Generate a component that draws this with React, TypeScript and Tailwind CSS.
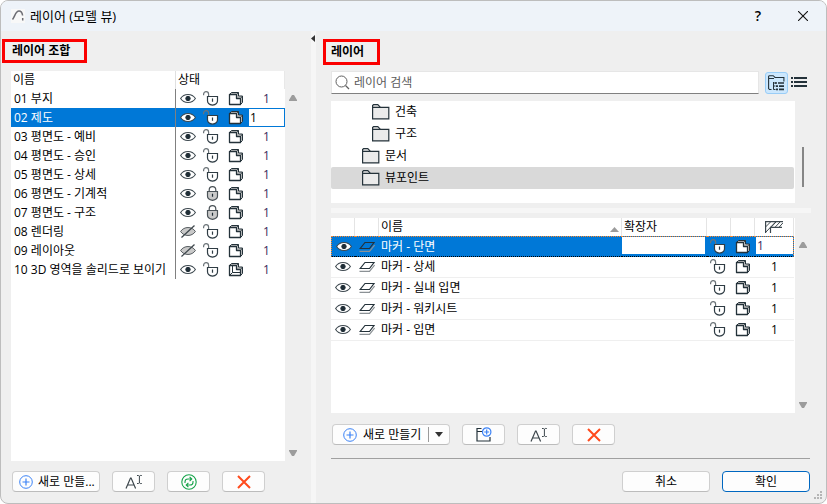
import { useState, type ReactNode } from 'react'

type Combination = { name: string; hidden?: boolean; locked?: boolean; wire?: boolean }

const combinations: Combination[] = [
  { name: '01 부지' },
  { name: '02 제도' },
  { name: '03 평면도 - 예비' },
  { name: '04 평면도 - 승인' },
  { name: '05 평면도 - 상세' },
  { name: '06 평면도 - 기계적', locked: true },
  { name: '07 평면도 - 구조', locked: true },
  { name: '08 렌더링', hidden: true },
  { name: '09 레이아웃', hidden: true },
  { name: '10 3D 영역을 솔리드로 보이기', wire: true },
]

const folders = [
  { name: '건축', nested: true },
  { name: '구조', nested: true },
  { name: '문서', nested: false },
  { name: '뷰포인트', nested: false },
]

const layers = ['마커 - 단면', '마커 - 상세', '마커 - 실내 입면', '마커 - 워키시트', '마커 - 입면']

function EyeIcon({ hidden = false }: { hidden?: boolean }) {
  if (hidden) {
    return (
      <svg width="16" height="13" viewBox="0 0 16 13" fill="none" stroke="#555b5f">
        <path d="M.6 6.500C4 1.200 12 1.200 15.400 6.500 12 11.800 4 11.800.6 6.500Z" fill="#c9c9c9" />
        <path d="M1.500 12.500 14.500.5" stroke="#3c454b" strokeWidth="1.200" />
      </svg>
    )
  }
  return (
    <svg width="16" height="13" viewBox="0 0 16 13" fill="none" stroke="#3d484f">
      <path d="M.6 6.500C4 1.200 12 1.200 15.400 6.500 12 11.800 4 11.800.6 6.500Z" fill="#fff" strokeWidth="1.100" />
      <circle cx="8" cy="6.500" r="2.200" fill="#1f2d36" stroke="#1f2d36" />
    </svg>
  )
}

function LockIcon({ locked = false }: { locked?: boolean }) {
  if (locked) {
    return (
      <svg width="18" height="15" viewBox="0 0 18 15" fill="none" stroke="#4a5257" strokeWidth="1.200">
        <path d="M6.200 5.500V4a3.300 3.300 0 0 1 6.600 0v1.500" />
        <path d="M4.500 5.500h10v4.700c0 2.200-2.300 3.600-5 4.100-2.700-.5-5-1.900-5-4.100Z" fill="#c9c9c9" />
        <path d="M9.500 7.800v3" stroke="#1f2d36" />
      </svg>
    )
  }
  return (
    <svg width="18" height="15" viewBox="0 0 18 15" fill="none" stroke="#2f3c44" strokeWidth="1.200">
      <path d="M.6 4.200V3.200a2.500 2.500 0 0 1 5 0v2.300" stroke="#6b7378" />
      <path d="M4.500 5.500h10v4.200c0 2.400-2.300 4-5 4.500-2.700-.5-5-2.100-5-4.500Z" fill="#fff" />
      <path d="M9.500 7.500v3.200" />
    </svg>
  )
}

function SolidIcon({ wire = false }: { wire?: boolean }) {
  return (
    <svg width="16" height="15" viewBox="0 0 16 15" fill="none" stroke="#24323a" strokeLinejoin="round">
      <path d="M1.500 3.500 3.500 1.500h7v3.500h4v6.500l-2 2Z" fill="#c9c9c9" />
      <path d="M1.500 3.500h7v4h4v6h-11Z" fill="#fff" strokeWidth="1.300" />
      <path d="m8.500 3.500 2-2M12.500 7.500l2-2.500" strokeWidth=".8" />
      {wire ? <path d="M4.500 3.500v7h8M1.500 13.500l3-3" /> : null}
    </svg>
  )
}

function LayerIcon() {
  return (
    <svg width="16" height="11" viewBox="0 0 16 11" fill="none">
      <path d="M.5 10.400h10L15.600 4" stroke="#8b9195" strokeWidth="1.200" />
      <path d="M6 1.500h9l-4.500 6H1.200Z" stroke="#24323a" strokeWidth="1.200" />
    </svg>
  )
}

function FolderIcon() {
  return (
    <svg width="18" height="16" viewBox="0 0 18 16" fill="none" stroke="#24323a" strokeWidth="1.200">
      <path d="M.6 14.400V1.500L1.500.7h4.300l2.400 2.500" fill="#ebebeb" />
      <path d="M.6 3.400h16.200v11.500H.6Z" fill="#ebebeb" />
    </svg>
  )
}

function PlusIcon() {
  return (
    <svg width="14" height="14" viewBox="0 0 14 14" fill="none" stroke="#3b82f6" className="shrink-0">
      <circle cx="7" cy="7" r="6.300" />
      <path d="M7 3.500v7M3.500 7h7" strokeWidth="1.200" />
    </svg>
  )
}

function RenameIcon() {
  return (
    <svg width="18" height="16" viewBox="0 0 18 16" fill="none" stroke="#3d474d" strokeWidth="1.200">
      <path d="m1 14.500 4.500-10.500h.6l4.500 10.500M2.600 11h6.600" />
      <path d="M12 1.500h1.500l.9.700.9-.7h1.500M14.400 2v7M12 9.500h1.500l.9-.7.9.7h1.500" strokeWidth="1" />
    </svg>
  )
}

function DeleteIcon() {
  return (
    <svg width="14" height="14" viewBox="0 0 14 14" stroke="#ff4a1c" strokeWidth="2">
      <path d="m1 1 12 12M13 1 1 13" />
    </svg>
  )
}

function RefreshIcon() {
  return (
    <svg width="16" height="16" viewBox="0 0 16 16" fill="none" stroke="#16a34a" strokeWidth="1.100">
      <circle cx="8" cy="8" r="7.200" />
      <path d="M4 9V7.800C4 6 5.500 5 7 5h3.500M8.600 2.800 10.800 5 8.600 7.200M12 7v1.200C12 10 10.500 11 9 11H5.500M7.400 8.800 5.200 11l2.200 2.200" />
    </svg>
  )
}

function NewFolderIcon() {
  return (
    <svg width="16" height="15" viewBox="0 0 16 15" fill="none" stroke="#24323a" strokeWidth="1.200">
      <path d="M6 4.500H1M14 10v4H1V1.500h4.500" />
      <circle cx="10.700" cy="5" r="4.200" fill="#fff" stroke="#3b82f6" />
      <path d="M10.700 2.500v5M8.200 5h5" stroke="#3b82f6" />
    </svg>
  )
}

function Arrow({ down = false }: { down?: boolean }) {
  return (
    <svg width="8" height="6" viewBox="0 0 8 6" fill="#9c9c9c">
      <path d={down ? 'M0 0h8v1L5 6H3L0 1Z' : 'M0 6h8V5L5 0H3L0 5Z'} />
    </svg>
  )
}

function ScrollArrows() {
  return (
    <div className="flex w-4 flex-col items-center justify-between pb-[5px]">
      <button aria-label="위로" className="block" type="button"><Arrow /></button>
      <button aria-label="아래로" className="block" type="button"><Arrow down /></button>
    </div>
  )
}

function IconButton({ label, children }: { label: string; children: ReactNode }) {
  return (
    <button
      aria-label={label}
      className="flex h-[21px] w-[43px] items-center justify-center rounded border border-[#cfcfcf] border-b-[#bcbcbc] bg-[#fdfdfd]"
      type="button"
    >
      {children}
    </button>
  )
}

function StateButton({ label, children }: { label: string; children: ReactNode }) {
  return (
    <button aria-label={label} className="flex w-full items-center justify-center" type="button">
      {children}
    </button>
  )
}

function CombinationPanel() {
  const [selected, setSelected] = useState(1)
  const [group, setGroup] = useState('1')

  return (
    <section className="flex w-[310px] shrink-0 flex-col pb-[11px]">
      <h2 className="mt-2 ml-px w-[85px] border-[3px] border-[#fb0000] px-[7px] py-px text-[12px] leading-4 font-bold">
        레이어 조합
      </h2>
      <div className="mt-2 flex min-h-0 flex-1 pl-[10px]">
        <div className="min-w-0 flex-1 bg-white">
          <table className="w-full table-fixed border-separate border-spacing-0">
            <colgroup>
              <col />
              <col className="w-6" />
              <col className="w-6" />
              <col className="w-6" />
              <col className="w-[37px]" />
            </colgroup>
            <thead>
              <tr className="h-[18px] text-left">
                <th className="border-r border-[#e0e0e0] pl-[2px] font-normal">이름</th>
                <th className="border-r border-[#e8e8e8] pl-[2px] font-normal" colSpan={4}>상태</th>
              </tr>
            </thead>
            <tbody>
              {combinations.map((item, index) => (
                <tr
                  className={index === selected ? 'h-[19px] bg-[#0078d7] text-white' : 'h-[19px]'}
                  key={item.name}
                  onClick={() => setSelected(index)}
                >
                  <td className="truncate border-r border-[#808080] pl-[3px]">{item.name}</td>
                  <td><StateButton label="표시"><EyeIcon hidden={item.hidden} /></StateButton></td>
                  <td><StateButton label="잠금"><LockIcon locked={item.locked} /></StateButton></td>
                  <td><StateButton label="솔리드"><SolidIcon wire={item.wire} /></StateButton></td>
                  {index === selected ? (
                    <td>
                      <input
                        aria-label="교차 그룹"
                        className="block h-[19px] w-full border border-[#0078d7] bg-white px-px text-black outline-none"
                        onChange={(e) => setGroup(e.target.value)}
                        value={group}
                      />
                    </td>
                  ) : (
                    <td className="text-center text-[#3b2a5c]">1</td>
                  )}
                </tr>
              ))}
            </tbody>
          </table>
        </div>
        <div className="flex w-[26px] pt-6"><ScrollArrows /></div>
      </div>
      <div className="mt-[10px] flex gap-3 pl-[11px]">
        <button
          className="flex h-[21px] w-[88px] items-center gap-[5px] rounded border border-[#cfcfcf] border-b-[#bcbcbc] bg-[#fdfdfd] px-[6px]"
          type="button"
        >
          <PlusIcon />
          <span className="whitespace-nowrap">새로 만들...</span>
        </button>
        <IconButton label="이름 변경"><RenameIcon /></IconButton>
        <IconButton label="업데이트"><RefreshIcon /></IconButton>
        <IconButton label="삭제"><DeleteIcon /></IconButton>
      </div>
    </section>
  )
}

function LayerTable() {
  const [selected, setSelected] = useState(0)
  const [extension, setExtension] = useState('')
  const [group, setGroup] = useState('1')

  return (
    <table className="w-full table-fixed border-separate border-spacing-0">
      <colgroup>
        <col className="w-6" />
        <col className="w-6" />
        <col />
        <col className="w-[85px]" />
        <col className="w-6" />
        <col className="w-6" />
        <col className="w-[39px]" />
      </colgroup>
      <thead>
        <tr className="h-[18px] text-left [&>th]:border-r [&>th]:border-[#e4e4e4] [&>th]:font-normal">
          <th />
          <th />
          <th>
            <div className="flex items-end justify-between pr-[2px] pl-[2px]">
              이름
              <svg className="mb-[3px]" width="9" height="5" viewBox="0 0 9 5" fill="#9c9c9c"><path d="M0 5h9L4.500 0Z" /></svg>
            </div>
          </th>
          <th className="pl-[2px]">확장자</th>
          <th />
          <th />
          <th>
            <svg className="mx-auto" width="18" height="12" viewBox="0 0 18 12" fill="none" stroke="#3d484f">
              <path d="M.6 12V.7H18M5.500 12V6.300H17" strokeWidth="1.200" />
              <path d="m.5 6 5-5M.5 11.500l10-10.500M6 6.300 11 1M10 6.300 15 1M14 6.300l4-4.500" />
            </svg>
          </th>
        </tr>
      </thead>
      <tbody>
        {layers.map((name, index) => (
          <tr
            className={
              index === selected
                ? 'h-[21px] bg-[#0078d7] text-white [&>td]:border-t [&>td]:border-b [&>td]:border-dotted [&>td]:border-t-[#ff8728] [&>td]:border-b-black [&>td:first-child]:border-l [&>td:first-child]:border-l-[#ff8728] [&>td:last-child]:border-r [&>td:last-child]:border-r-[#ff8728]'
                : 'h-[21px] [&>td]:border-b [&>td]:border-[#efefef] [&>td]:pb-px'
            }
            key={name}
            onClick={() => setSelected(index)}
          >
            <td><StateButton label="표시"><EyeIcon /></StateButton></td>
            <td><StateButton label="레이어"><LayerIcon /></StateButton></td>
            <td className="truncate pl-[2px]">{name}</td>
            {index === selected ? (
              <td className="pr-[2px] align-top">
                <input
                  aria-label="확장자"
                  className="block h-[17px] w-full bg-white px-px text-black outline-none"
                  onChange={(e) => setExtension(e.target.value)}
                  value={extension}
                />
              </td>
            ) : (
              <td />
            )}
            <td><StateButton label="잠금"><LockIcon /></StateButton></td>
            <td><StateButton label="솔리드"><SolidIcon /></StateButton></td>
            {index === selected ? (
              <td className="pl-px align-top">
                <input
                  aria-label="교차 그룹"
                  className="block h-[17px] w-full bg-white px-px text-[#3b2a5c] outline-none"
                  onChange={(e) => setGroup(e.target.value)}
                  value={group}
                />
              </td>
            ) : (
              <td className="text-center">1</td>
            )}
          </tr>
        ))}
      </tbody>
    </table>
  )
}

function LayerPanel() {
  const [query, setQuery] = useState('')
  const [folder, setFolder] = useState('뷰포인트')

  return (
    <section className="flex min-w-0 flex-1 flex-col pr-[15px] pb-[11px] pl-[15px]">
      <h2 className="mt-2 -ml-2 w-[57px] border-[3px] border-[#fb0000] px-[5px] py-[2px] text-[12px] leading-4 font-bold">
        레이어
      </h2>
      <div className="mt-[6px] flex items-center">
        <label className="flex h-[23px] flex-1 items-center gap-1 border border-[#e6e6e6] border-b-[#808080] bg-white pl-[3px]">
          <svg width="15" height="15" viewBox="0 0 15 15" fill="none" stroke="#5f5f5f">
            <circle cx="6.500" cy="6.500" r="5.500" />
            <path d="m10.500 10.500 3.500 3.500" strokeWidth="1.200" />
          </svg>
          <input
            aria-label="레이어 검색"
            className="min-w-0 flex-1 outline-none placeholder:text-[#5a5a5a]"
            onChange={(e) => setQuery(e.target.value)}
            placeholder="레이어 검색"
            value={query}
          />
        </label>
        <button
          aria-label="트리 보기"
          className="ml-[6px] flex h-[22px] w-[23px] items-center justify-center rounded-[3px] border border-[#99cdf7] bg-[#cce7fd]"
          type="button"
        >
          <svg width="17" height="16" viewBox="0 0 17 16" fill="none" stroke="#24323a">
            <path d="M3.500 14.500h-2L.6 13.500V1.500L1.200.7h4L7 2.500h8.900v4M.6 3.500H6" strokeWidth="1.100" />
            <path d="M5.500 7v7.500H7.500M5.500 11H7.500M5 8h3" />
            <path d="M7 8h2M10 8h6M8 11.200h2M11 11.200h5M8 14.400h2M11 14.400h5" strokeWidth="1.700" />
          </svg>
        </button>
        <button aria-label="목록 보기" className="mr-1 ml-[3px]" type="button">
          <svg width="16" height="11" viewBox="0 0 16 11" fill="#24323a">
            <path d="M0 0h2v2H0zM3 0h13v2H3zM0 4h2v2H0zM3 4h13v2H3zM0 8h2v2H0zM3 8h13v2H3z" />
          </svg>
        </button>
      </div>

      <div className="mt-[7px] flex h-[102px] shrink-0">
        <ul className="min-w-0 flex-1 overflow-hidden bg-white pr-px">
          {folders.map((item) => (
            <li key={item.name}>
              <button
                className={`flex h-[22px] w-full items-center gap-[5px] rounded-[2px] text-left ${item.nested ? 'pl-[41px]' : 'pl-[31px]'} ${item.name === folder ? 'bg-[#d9d9d9]' : ''}`}
                onClick={() => setFolder(item.name)}
                type="button"
              >
                <FolderIcon />
                {item.name}
              </button>
            </li>
          ))}
        </ul>
        <div className="w-4 pt-[46px] pl-[7px]">
          <div className="h-10 w-[2px] bg-[#868686]" />
        </div>
      </div>

      <div className="my-[5px] h-[5px] shrink-0 bg-[#f6f6f6]" />

      <div className="flex min-h-0 flex-1">
        <div className="min-w-0 flex-1 bg-white pr-px"><LayerTable /></div>
        <div className="flex pt-6"><ScrollArrows /></div>
      </div>

      <div className="mt-[11px] flex gap-3 pl-px">
        <div className="flex h-[21px] w-[118px] items-center rounded border border-[#cfcfcf] border-b-[#bcbcbc] bg-[#fdfdfd]">
          <button className="flex flex-1 items-center gap-[6px] pl-[10px] whitespace-nowrap" type="button">
            <PlusIcon />
            새로 만들기
          </button>
          <button
            aria-label="새로 만들기 옵션"
            className="flex h-[15px] w-[21px] items-center justify-center border-l border-[#9a9a9a]"
            type="button"
          >
            <svg width="8" height="5" viewBox="0 0 8 5" fill="#333"><path d="M0 0h8L4 5Z" /></svg>
          </button>
        </div>
        <IconButton label="새 폴더"><NewFolderIcon /></IconButton>
        <IconButton label="이름 변경"><RenameIcon /></IconButton>
        <IconButton label="삭제"><DeleteIcon /></IconButton>
      </div>

      <div className="mt-[13px] mr-px flex justify-end gap-3 border-t border-[#a0a0a0] pt-3">
        <button className="h-[21px] w-[88px] rounded border border-[#cfcfcf] border-b-[#bcbcbc] bg-[#fdfdfd]" type="button">
          취소
        </button>
        <button className="h-[21px] w-[88px] rounded border border-[#0067c0] bg-[#fdfdfd]" type="button">
          확인
        </button>
      </div>
    </section>
  )
}

export default function App() {
  return (
    <div className="h-screen bg-white font-['Open_Sans','Noto_Sans_CJK_KR',sans-serif] text-[12px] leading-4 text-black">
      <div className="relative flex h-full flex-col overflow-hidden rounded-lg border border-[#bdbdbd] bg-[#efefef]">
        <header className="flex h-[30px] shrink-0 items-center bg-[#eef3f9] pr-[18px] pl-[10px]">
          <svg width="14" height="14" viewBox="0 0 14 14" fill="none">
            <path d="M0 0h14v14H0z" fill="#f8f8f8" />
            <path d="M1.500 10.500C4 7.500 4.500 2 8 2c2.300 0 3.300 2 3.600 4.500" stroke="#6d6d74" strokeWidth="1.500" />
            <path d="M11.700 9v2.500" stroke="#6d6d74" strokeWidth="1.500" />
          </svg>
          <h1 className="ml-[5px] flex-1 text-[13px]">레이어 (모델 뷰)</h1>
          <button aria-label="도움말" className="text-[14px] font-semibold" type="button">?</button>
          <button aria-label="닫기" className="ml-[37px]" type="button">
            <svg width="10" height="10" viewBox="0 0 10 10" stroke="#111" strokeWidth="1.100"><path d="m0 0 10 10M10 0 0 10" /></svg>
          </button>
        </header>
        <main className="flex min-h-0 flex-1">
          <CombinationPanel />
          <div className="w-[5px] shrink-0 bg-[#f6f6f6] pt-1">
            <button aria-label="패널 접기" className="block" type="button">
              <svg width="4" height="7" viewBox="0 0 4 7" fill="#333"><path d="M4 0v7L0 3.500Z" /></svg>
            </button>
          </div>
          <LayerPanel />
        </main>
        <svg className="absolute right-1 bottom-1" width="8" height="8" viewBox="0 0 8 8" fill="#b5b5b5">
          <path d="M6 0h2v2H6zM3 3h2v2H3zM6 3h2v2H6zM0 6h2v2H0zM3 6h2v2H3zM6 6h2v2H6z" />
        </svg>
      </div>
    </div>
  )
}
